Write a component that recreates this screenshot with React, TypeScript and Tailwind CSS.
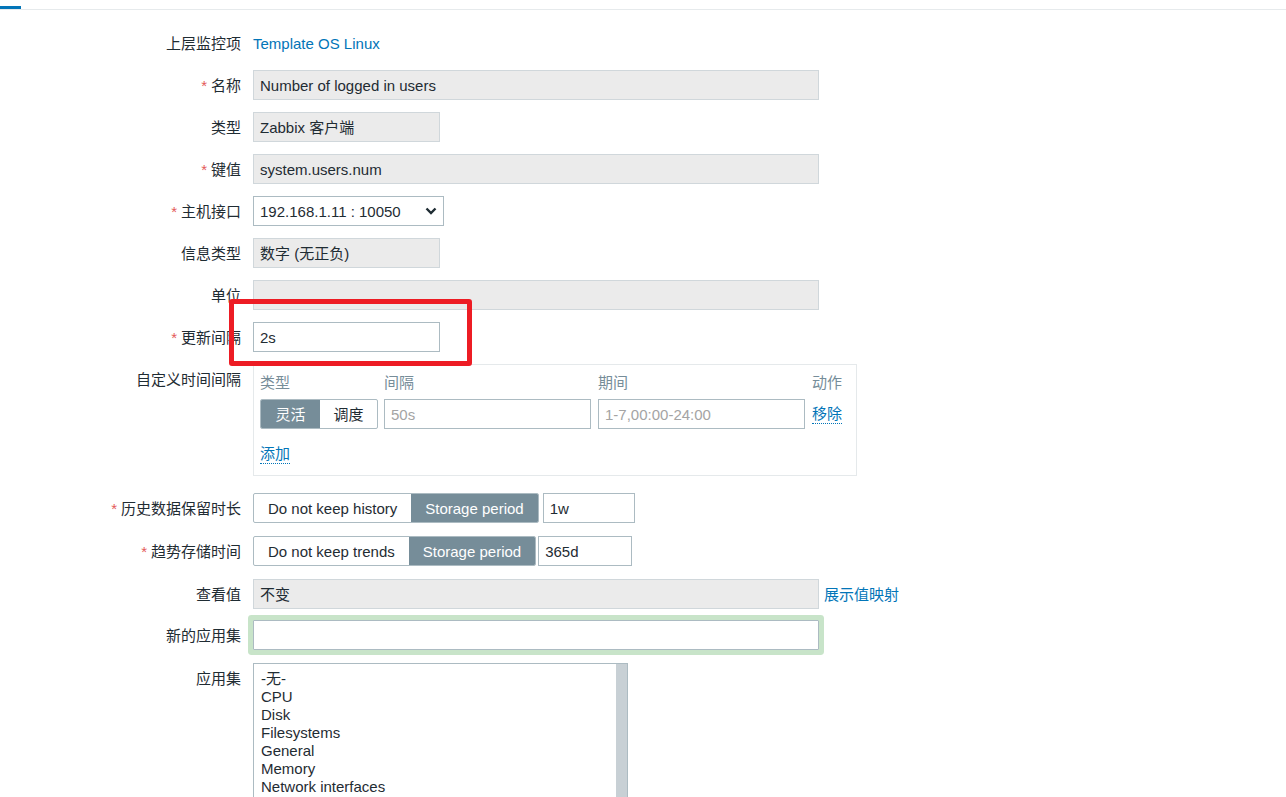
import React from "react";
import clsx from "clsx";

const font = "font-['Liberation_Sans','Noto_Sans_CJK_SC',sans-serif]";

function Row({ label, req, className, children }: any) {
  return (
    <div className={clsx("flex items-start", className)}>
      <div className="relative top-[1px] w-[241px] shrink-0 whitespace-nowrap text-right leading-[30px]">
        {req ? <span className="mr-[4px] text-[#e45959]">*</span> : null}
        {label}
      </div>
      <div className="ml-[12px] flex items-start">{children}</div>
    </div>
  );
}

function ReadOnly({ value, w }: any) {
  return (
    <div className={clsx("h-[30px] overflow-hidden border border-[#d0d7db] bg-[#ebebeb] px-[6px] leading-[30px]", w)}>{value}</div>
  );
}

function Input({ value, placeholder, w }: any) {
  return (
    <div className={clsx("h-[30px] overflow-hidden border border-[#acbbc2] bg-white px-[6px] leading-[30px]", w)}>
      {value ? value : <span className="text-[#a4a4a4]">{placeholder}</span>}
    </div>
  );
}

function Segmented({ items, active }: any) {
  return (
    <div className="flex h-[30px] overflow-hidden rounded-[2px] border border-[#acbbc2] bg-white">
      {items.map((it: any, i: number) => (
        <div
          key={it.label}
          className={clsx(
            "text-center leading-[29px]",
            it.cls,
            i === active ? "bg-[#768d99] text-white" : "text-[#1f2c33]"
          )}
        >
          {it.label}
        </div>
      ))}
    </div>
  );
}

function Link({ children, dotted }: any) {
  return (
    <span className={clsx("text-[#0275b8]", dotted && "inline-block border-b border-dotted border-[#0275b8] leading-[18px]")}>
      {children}
    </span>
  );
}

export default function App() {
  const apps = ["-无-", "CPU", "Disk", "Filesystems", "General", "Memory", "Network interfaces"];

  return (
    <div className={clsx("relative h-[797px] w-full overflow-hidden bg-white text-[15px] text-[#1f2c33]", font)}>
      <div className="relative h-[10px] border-b border-[#e6eaec]">
        <div className="absolute left-0 top-[6px] h-[3px] w-[21px] bg-[#0275b8]" />
      </div>

      <Row label="上层监控项" className="mt-[18px]">
        <span className="relative top-[1px] leading-[30px] text-[#0275b8]">Template OS Linux</span>
      </Row>

      <Row label="名称" req className="mt-[12px]">
        <ReadOnly value="Number of logged in users" w="w-[566px]" />
      </Row>

      <Row label="类型" className="mt-[12px]">
        <ReadOnly value="Zabbix 客户端" w="w-[187px]" />
      </Row>

      <Row label="键值" req className="mt-[12px]">
        <ReadOnly value="system.users.num" w="w-[566px]" />
      </Row>

      <Row label="主机接口" req className="mt-[12px]">
        <div className="flex h-[30px] w-[191px] items-center justify-between border border-[#acbbc2] bg-white pl-[6px] pr-[6px]">
          <span className="relative top-[1px]">192.168.1.11 : 10050</span>
          <svg width="12" height="8" viewBox="0 0 12 8">
            <path d="M1.5 1.5 L6 6 L10.5 1.5" fill="none" stroke="#1f2c33" strokeWidth="2.4" />
          </svg>
        </div>
      </Row>

      <Row label="信息类型" className="mt-[12px]">
        <ReadOnly value="数字 (无正负)" w="w-[187px]" />
      </Row>

      <Row label="单位" className="mt-[12px]">
        <ReadOnly value="" w="w-[566px]" />
      </Row>

      <Row label="更新间隔" req className="mt-[12px]">
        <Input value="2s" w="w-[187px]" />
      </Row>

      <Row label="自定义时间间隔" className="mt-[12px]">
        <div className="h-[112px] w-[604px] border border-[#e5e9eb] pl-[6px] pt-[9px]">
          <div className="flex leading-[18px] text-[#768d99]">
            <div className="w-[118px]">类型</div>
            <div className="ml-[6px] w-[207px]">间隔</div>
            <div className="ml-[7px] w-[207px]">期间</div>
            <div className="ml-[7px]">动作</div>
          </div>
          <div className="mt-[7px] flex items-center">
            <Segmented
              active={0}
              items={[
                { label: "灵活", cls: "w-[59px]" },
                { label: "调度", cls: "w-[57px]" },
              ]}
            />
            <div className="ml-[6px]">
              <Input placeholder="50s" w="w-[207px]" />
            </div>
            <div className="ml-[7px]">
              <Input placeholder="1-7,00:00-24:00" w="w-[207px]" />
            </div>
            <div className="ml-[7px]">
              <Link dotted>移除</Link>
            </div>
          </div>
          <div className="mt-[14px]">
            <Link dotted>添加</Link>
          </div>
        </div>
      </Row>

      <Row label="历史数据保留时长" req className="mt-[17px]">
        <Segmented
          active={1}
          items={[
            { label: "Do not keep history", cls: "px-[14px]" },
            { label: "Storage period", cls: "px-[14px]" },
          ]}
        />
        <div className="ml-[4px]">
          <Input value="1w" w="w-[92px]" />
        </div>
      </Row>

      <Row label="趋势存储时间" req className="mt-[13px]">
        <Segmented
          active={1}
          items={[
            { label: "Do not keep trends", cls: "px-[14px]" },
            { label: "Storage period", cls: "px-[14px]" },
          ]}
        />
        <div className="ml-[2px]">
          <Input value="365d" w="w-[94px]" />
        </div>
      </Row>

      <Row label="查看值" className="mt-[13px]">
        <ReadOnly value="不变" w="w-[566px]" />
        <span className="relative top-[1px] ml-[5px] leading-[30px]">
          <Link>展示值映射</Link>
        </span>
      </Row>

      <Row label="新的应用集" className="mt-[11px]">
        <div className="h-[30px] w-[566px] rounded-[1px] border border-[#acbbc2] bg-white shadow-[0_0_0_5px_#c8e4c9]" />
      </Row>

      <Row label="应用集" className="mt-[13px]">
        <div className="flex h-[200px] w-[375px] border border-[#acbbc2] bg-white">
          <div className="flex-1 px-[7px] pt-[6px] leading-[18px]">
            {apps.map((a) => (
              <div key={a}>{a}</div>
            ))}
          </div>
          <div className="w-[11px] bg-[#c8d0d5]" />
        </div>
      </Row>

      <div className="absolute left-[229px] top-[299px] h-[67px] w-[243px] rounded-[3px] border-[5px] border-[#ed1c24]" />
    </div>
  );
}
